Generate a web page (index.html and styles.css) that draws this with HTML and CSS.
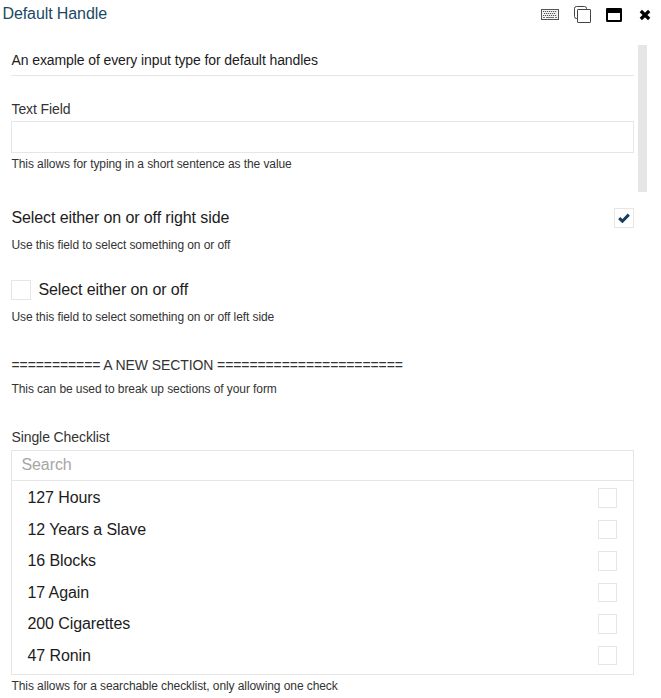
FILE: index.html
```html
<!DOCTYPE html>
<html lang="en">
<head>
<meta charset="utf-8">
<title>Default Handle</title>
<link rel="stylesheet" href="styles.css">
</head>
<body>
<header class="titlebar">
  <h1 class="title">Default Handle</h1>
  <div class="actions">
    <svg class="keyboard" width="18" height="11" viewBox="0 0 18 11">
      <rect x=".5" y=".5" width="17" height="10" fill="#f4f4f4" stroke="#555"/>
      <path d="M2 2.5h14M3 4.5h12M2 6.5h14" stroke="#555" stroke-dasharray="1.2 .8"/>
      <path d="M2 8.5h2M5 8.5h8M14 8.5h2" stroke="#777"/>
    </svg>
    <svg class="copy" width="17" height="17" viewBox="0 0 17 17" fill="none" stroke="#444">
      <path d="M3.5 12.5h-1a2 2 0 0 1-2-2v-8a2 2 0 0 1 2-2h8a2 2 0 0 1 2 2v1"/>
      <rect x="3.5" y="3.5" width="13" height="13" rx=".5"/>
    </svg>
    <svg class="window" width="16" height="14" viewBox="0 0 16 14">
      <rect x="1" y="1" width="14" height="12" rx=".5" fill="#fff" stroke="#000" stroke-width="2"/>
      <path d="M0 5V1.3Q0 .2 1.2 .2h13.6Q16 .2 16 1.3V5z"/>
    </svg>
    <svg class="close" width="12" height="12" viewBox="0 0 12 12">
      <path d="M1.8 2l8.4 8M10.2 2l-8.4 8" stroke="#000" stroke-width="3.3"/>
    </svg>
  </div>
</header>
<main class="form">
  <p class="description">An example of every input type for default handles</p>

  <section class="field text-field">
    <label class="label" for="text">Text Field</label>
    <input class="input" id="text" type="text">
    <p class="help">This allows for typing in a short sentence as the value</p>
  </section>

  <section class="field toggle-field">
    <div class="toggle toggle-right">
      <span>Select either on or off right side</span>
      <span class="box">
        <svg width="12" height="10" viewBox="0 0 12 10"><path d="M1.2 5.2l3.2 3L10.8 1.6" fill="none" stroke="#173f5f" stroke-width="3"/></svg>
      </span>
    </div>
    <p class="help">Use this field to select something on or off</p>
  </section>

  <section class="field toggle-field">
    <div class="toggle">
      <span class="box"></span>
      <span>Select either on or off</span>
    </div>
    <p class="help">Use this field to select something on or off left side</p>
  </section>

  <section class="field section-break">
    <p class="label">=========== A NEW SECTION =======================</p>
    <p class="help">This can be used to break up sections of your form</p>
  </section>

  <section class="field checklist-field">
    <label class="label" for="search">Single Checklist</label>
    <input class="input search" id="search" type="text" placeholder="Search">
    <ul class="checklist">
      <li><span class="name">127 Hours</span><span class="check"></span></li>
      <li><span class="name">12 Years a Slave</span><span class="check"></span></li>
      <li><span class="name">16 Blocks</span><span class="check"></span></li>
      <li><span class="name">17 Again</span><span class="check"></span></li>
      <li><span class="name">200 Cigarettes</span><span class="check"></span></li>
      <li><span class="name">47 Ronin</span><span class="check"></span></li>
    </ul>
    <p class="help">This allows for a searchable checklist, only allowing one check</p>
  </section>
</main>
<div class="scroll-thumb"></div>
</body>
</html>
```
FILE: styles.css
```css
* { box-sizing: border-box; margin: 0; padding: 0; }

body {
  position: relative;
  height: 698px;
  overflow: hidden;
  background: #fff;
  color: #1c1c1c;
  font: 16px/20px "Liberation Sans", Arial, sans-serif;
  letter-spacing: -0.1px;
}

.titlebar {
  display: flex;
  justify-content: space-between;
  height: 45px;
  padding: 4px 10px 0 2.5px;
}

.title { color: #1b4965; font-size: 16px; font-weight: 400; }

.actions { display: flex; align-items: center; height: 21px; }
.copy { margin-left: 15px; }
.window { margin-left: 15px; }
.close { margin-left: 17px; }

.form { width: 634px; padding-left: 11px; }

.description {
  height: 31px;
  padding-top: 5px;
  padding-left: .5px;
  border-bottom: 1px solid #e6e6e6;
  font-size: 14px;
}

.label {
  display: block;
  height: 20px;
  padding-left: .5px;
  color: #333;
  font-size: 14px;
}

.help {
  padding-left: .5px;
  color: #333;
  font-size: 12px;
  letter-spacing: -0.085px;
}

.input {
  display: block;
  width: 100%;
  height: 32px;
  border: 1px solid #e6e6e6;
  font: inherit;
  letter-spacing: inherit;
  outline: 0;
}

.text-field { padding-top: 23px; height: 132px; }
.text-field .input { margin-top: 2px; }
.text-field .help { margin-top: 1px; }

.toggle-field { height: 72px; }
.toggle { display: flex; align-items: center; gap: 7.5px; height: 20px; }
.toggle-right { justify-content: space-between; padding-left: .5px; }
.toggle-field .help { margin-top: 7px; }

.box {
  display: flex;
  align-items: center;
  justify-content: center;
  width: 20px;
  height: 20px;
  border: 1px solid #e6e6e6;
}

.section-break { height: 72px; padding-top: 3px; }
.section-break .help { margin-top: 4px; }

.checklist-field { padding-top: 3px; }
.search { height: 31px; margin-top: 3px; padding: 0 9.5px 2px; }
.search::placeholder { color: #a6a6a6; opacity: 1; }

.checklist {
  height: 194px;
  padding: 1px 16px 0 15.5px;
  border: 1px solid #e6e6e6;
  border-top: 0;
  list-style: none;
}
.checklist li {
  display: flex;
  align-items: center;
  justify-content: space-between;
  height: 31.5px;
}
.name { padding-top: .6px; }
.check { width: 19px; height: 19.5px; border: 1px solid #e6e6e6; }
.checklist-field .help { margin-top: 1px; }

.scroll-thumb {
  position: absolute;
  top: 45px;
  left: 638px;
  width: 9px;
  height: 147px;
  background: #e6e6e6;
}
```
